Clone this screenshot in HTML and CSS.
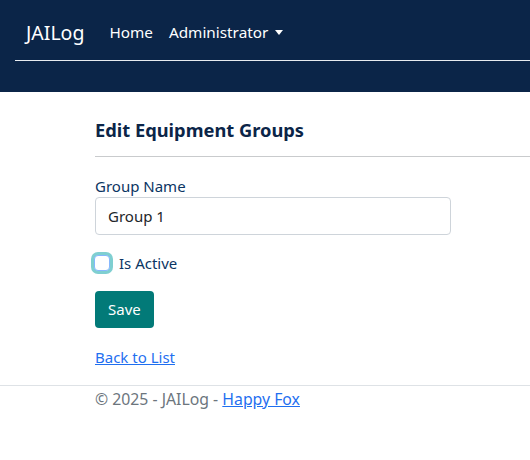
FILE: index.html
```html
<!DOCTYPE html>
<html>
<head>
<meta charset="utf-8">
<link rel="stylesheet" href="styles.css">
</head>
<body>
<header class="navbar">
  <div class="nav-row">
    <span class="brand">JAILog</span>
    <a class="nav-link">Home</a>
    <a class="nav-link dropdown">Administrator <span class="caret"></span></a>
  </div>
  <div class="nav-line"></div>
</header>
<main class="main">
  <h4 class="title">Edit Equipment Groups</h4>
  <hr class="rule">
  <div class="form-group">
    <label class="label">Group Name</label>
    <div class="input">Group 1</div>
  </div>
  <div class="check-row">
    <span class="checkbox"></span>
    <span class="check-label">Is Active</span>
  </div>
  <div class="btn">Save</div>
  <div class="back"><a href="#">Back to List</a></div>
</main>
<footer class="footer">
  <div class="footer-text">© 2025 - JAILog - <a href="#">Happy Fox</a></div>
</footer>
</body>
</html>
```
FILE: styles.css
```css
* { box-sizing: border-box; }
body {
  margin: 0;
  font-family: "Noto Sans", "Open Sans", sans-serif;
  font-size: 15px;
  color: #212529;
  background: #fff;
}
.navbar {
  background: #0b2548;
  height: 92px;
  padding-top: 16px;
}
.nav-row {
  display: flex;
  align-items: center;
  height: 32px;
  padding-left: 26px;
}
.brand {
  color: #fff;
  font-size: 19.5px;
  margin-right: 25px;
}
.nav-link {
  color: #fff;
  font-size: 15.3px;
  margin-right: 16px;
  display: flex;
  align-items: center;
}
.caret {
  display: inline-block;
  width: 0;
  height: 0;
  border-left: 4.5px solid transparent;
  border-right: 4.5px solid transparent;
  border-top: 5px solid #fff;
  margin-left: 7px;
  margin-top: 1px;
}
.nav-line {
  margin-top: 12px;
  margin-left: 15px;
  height: 1px;
  background: #e8ecf0;
}
.main {
  padding-left: 95px;
  padding-top: 26px;
}
.title {
  margin: 0;
  font-size: 18.3px;
  font-weight: 700;
  color: #0b2548;
  line-height: 24px;
}
.rule {
  margin: 14px 0 0;
  border: 0;
  border-top: 1px solid #c9cbcd;
}
.form-group {
  margin-top: 18px;
}
.label {
  display: block;
  color: #0b3563;
  font-size: 15px;
  line-height: 22px;
  margin-bottom: 0;
}
.input {
  width: 356px;
  height: 38px;
  border: 1px solid #ced4da;
  border-radius: 4px;
  padding: 0 12px;
  line-height: 36px;
  color: #212529;
}
.check-row {
  display: flex;
  align-items: center;
  margin-top: 18px;
  height: 20px;
}
.checkbox {
  width: 16px;
  height: 16px;
  border: 1px solid #86b7fe;
  border-radius: 4px;
  background: #fff;
  box-shadow: 0 0 0 3px #7fcfd1;
  margin-left: -1px;
  margin-right: 9px;
}
.check-label {
  color: #0b3563;
  font-size: 15px;
}
.btn {
  display: inline-block;
  margin-top: 18px;
  background: #027a78;
  color: #fff;
  border-radius: 4px;
  height: 37px;
  line-height: 37px;
  padding: 0 13px;
}
.back {
  margin-top: 18px;
  line-height: 22px;
}
.back a, .footer-text a {
  color: #1f6ff0;
  text-decoration: underline;
}
.footer {
  margin-top: 17px;
  border-top: 1px solid #dee2e6;
}
.footer-text {
  padding-left: 95px;
  padding-top: 2px;
  color: #6c757d;
  font-size: 15.8px;
  line-height: 22px;
}
```
